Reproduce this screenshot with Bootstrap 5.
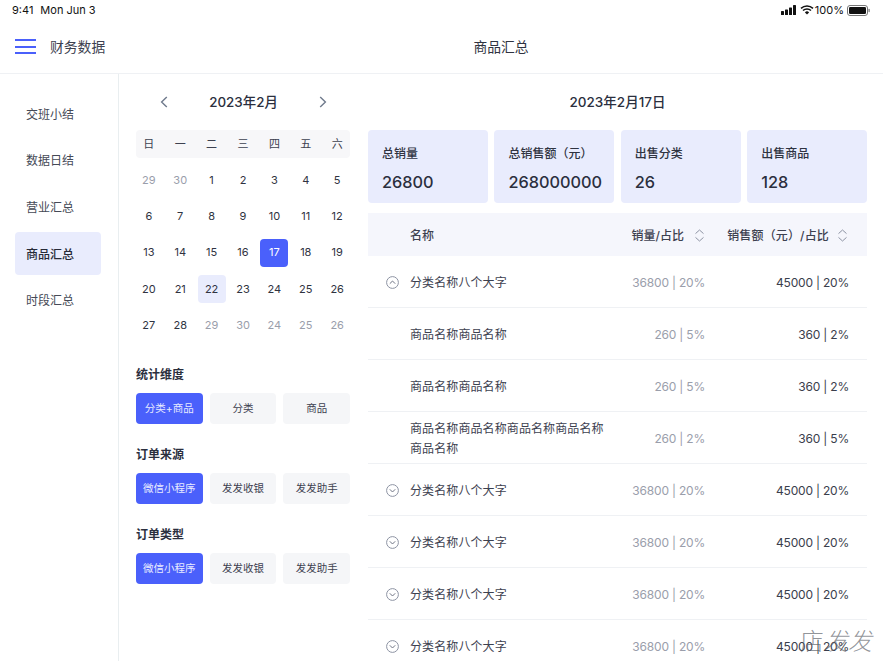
<!DOCTYPE html>
<html lang="zh">
<head>
<meta charset="utf-8">
<title>商品汇总</title>
<link href="https://cdn.jsdelivr.net/npm/bootstrap@5.3.0/dist/css/bootstrap.min.css" rel="stylesheet">
<style>
html,body{height:661px;overflow:hidden;background:#fff}
body{font-family:Inter,"Noto Sans CJK SC",sans-serif;color:#2f3341;font-size:12px;position:relative}
.sbar{height:20px;padding:0 13px 0 12px;font-size:11px;color:#111}
.sbar span.tm{margin-right:7px}
.sig{margin-right:4px}
.wifi{margin-right:1px}
.pct{margin-right:3px}
.topbar{height:54px;border-bottom:1px solid #eff1f4}
.topleft{width:119px;padding-left:15px;gap:14px;font-size:13.8px;color:#3d4150;flex:none}
.topleft span,.toptitle{padding-top:2px}
.burger{width:21px;height:15px;display:flex;flex-direction:column;justify-content:space-between}
.burger i{display:block;height:2px;background:#4a60fb}
.toptitle{font-size:13.8px;color:#2f3341}
.shell{height:587px}
.side{width:119px;border-right:1px solid #e9eef0;padding:18px 17px 0 15px;flex:none}
.sideitem{height:43px;margin-bottom:3.7px;padding:2px 0 0 11px;border-radius:4px;color:#454956}
.sideitem.on{background:#e9ecfd;color:#262a38;font-weight:500}
.calcol{width:249px;flex:none;padding:0 18px 0 17px}
.monthhd{height:56px;padding:0 23px 0 24px;font-size:13.4px;font-weight:500;color:#2b2f3e}
.wk,.dayrow{display:grid;grid-template-columns:repeat(7,31.4px);justify-content:center}
.wk{background:#f7f7f9;border-radius:4px;height:27.5px;align-items:center;text-align:center;font-size:11px;color:#3d4150;margin-bottom:4.5px}
.dayrow{height:36.3px;align-items:center;text-align:center;font-size:11px;color:#2f3341}
.dayrow .dim{color:#9a9eab}
.dayrow span{display:flex;align-items:center;justify-content:center;height:28px;width:28px;margin:0 auto;border-radius:4px}
.dayrow span.sel{background:#4a60fb;color:#fff}
.dayrow span.near{background:#e9ecfd}
.sect{font-size:12px;font-weight:600;color:#2b2f3e;line-height:16px;margin-bottom:10px}
.sect.first{margin-top:24px}
.chips{gap:7px;margin-bottom:23px}
.chip{flex:1 1 0;height:31px;border-radius:4px;background:#f5f6f8;color:#3d4150;font-size:10.5px;white-space:nowrap}
.chip.on{background:#4a60fb;color:#e8ebff}
.maincol{flex:1;padding-right:16px;min-width:0}
.daytitle{height:56px;font-size:13.5px;font-weight:500;color:#2b2f3e}
.stats{display:grid;grid-template-columns:repeat(4,minmax(0,1fr));gap:6.5px;margin-bottom:10px}
.stat{background:#e9ecfd;border-radius:4px;height:73px;padding:15px 14px 0}
.stat .lbl{font-size:12px;font-weight:500;line-height:18px;color:#2f3341}
.stat .val{font-size:16.3px;font-weight:500;line-height:22px;margin-top:8px;color:#2b2f3e}
.trow{display:flex;align-items:center;height:52px;padding-top:2px;border-bottom:1px solid #eff1f4;font-size:12px}
.trow.hd{height:43px;background:#f5f6fc;border-bottom:0;font-weight:500;color:#3d4150}
.c0{width:42px;flex:none;padding-left:18px;display:flex}
.c1{width:203px;flex:none;line-height:20px;color:#3d4150;letter-spacing:.1px}
.c2{width:92px;flex:none;text-align:right;color:#9a9eab;letter-spacing:-.2px}
.c3{flex:1;text-align:right;padding-right:18px;color:#3a3e4c;letter-spacing:-.2px}
.hd .c2,.hd .c3{color:#3d4150;display:flex;justify-content:flex-end;align-items:center;gap:10px;letter-spacing:0}
.hd .c3{gap:8px;padding-right:19px;letter-spacing:.15px}
.wmark{position:absolute;right:11px;bottom:6px;font-size:24px;font-weight:300;color:rgba(90,94,102,.66);line-height:26px}
.wmark em{font-style:italic}
</style>
</head>
<body>
<div class="sbar d-flex align-items-center justify-content-between">
  <div><span class="tm">9:41</span><span>Mon Jun 3</span></div>
  <div class="d-flex align-items-center">
    <svg class="sig" width="15" height="10" viewBox="0 0 15 10"><rect x="0" y="6" width="3" height="4" rx=".6" fill="#111"/><rect x="4" y="4.5" width="3" height="5.5" rx=".6" fill="#111"/><rect x="8" y="2.5" width="3" height="7.5" rx=".6" fill="#111"/><rect x="12" y="0" width="3" height="10" rx=".6" fill="#111"/></svg>
    <svg class="wifi" width="14" height="10" viewBox="0 0 14 10"><path d="M1 3.4a8.6 8.6 0 0 1 12 0M3 5.5a5.8 5.8 0 0 1 8 0" fill="none" stroke="#111" stroke-width="1.5"/><path d="M7 9.6 4.9 7.4a3 3 0 0 1 4.2 0z" fill="#111"/></svg>
    <span class="pct">100%</span>
    <svg width="23" height="11" viewBox="0 0 23 11"><rect x=".5" y=".5" width="20" height="10" rx="2.5" fill="none" stroke="#777"/><rect x="2" y="2" width="17" height="7" rx="1.3" fill="#111"/><rect x="21.5" y="3.8" width="1.2" height="3.4" rx=".6" fill="#777"/></svg>
  </div>
</div>
<div class="topbar d-flex align-items-center">
  <div class="topleft d-flex align-items-center"><div class="burger"><i></i><i></i><i></i></div><span>财务数据</span></div>
  <div class="toptitle flex-grow-1 text-center">商品汇总</div>
</div>
<div class="shell d-flex">
  <div class="side">
    <div class="sideitem d-flex align-items-center">交班小结</div>
    <div class="sideitem d-flex align-items-center">数据日结</div>
    <div class="sideitem d-flex align-items-center">营业汇总</div>
    <div class="sideitem on d-flex align-items-center">商品汇总</div>
    <div class="sideitem d-flex align-items-center">时段汇总</div>
  </div>
  <div class="calcol">
    <div class="monthhd d-flex align-items-center justify-content-between">
      <svg width="8" height="12" viewBox="0 0 8 12"><path d="M6.8 1 1.6 6l5.2 5" fill="none" stroke="#6f7a8c" stroke-width="1.4"/></svg>
      <span>2023年2月</span>
      <svg width="8" height="12" viewBox="0 0 8 12"><path d="M1.2 1 6.4 6l-5.2 5" fill="none" stroke="#6f7a8c" stroke-width="1.4"/></svg>
    </div>
    <div class="wk"><span>日</span><span>一</span><span>二</span><span>三</span><span>四</span><span>五</span><span>六</span></div>
    <div class="dayrow"><span class="dim">29</span><span class="dim">30</span><span>1</span><span>2</span><span>3</span><span>4</span><span>5</span></div>
    <div class="dayrow"><span>6</span><span>7</span><span>8</span><span>9</span><span>10</span><span>11</span><span>12</span></div>
    <div class="dayrow"><span>13</span><span>14</span><span>15</span><span>16</span><span class="sel">17</span><span>18</span><span>19</span></div>
    <div class="dayrow"><span>20</span><span>21</span><span class="near">22</span><span>23</span><span>24</span><span>25</span><span>26</span></div>
    <div class="dayrow"><span>27</span><span>28</span><span class="dim">29</span><span class="dim">30</span><span class="dim">24</span><span class="dim">25</span><span class="dim">26</span></div>
    <div class="sect first">统计维度</div>
    <div class="chips d-flex"><div class="chip on d-flex align-items-center justify-content-center">分类+商品</div><div class="chip d-flex align-items-center justify-content-center">分类</div><div class="chip d-flex align-items-center justify-content-center">商品</div></div>
    <div class="sect">订单来源</div>
    <div class="chips d-flex"><div class="chip on d-flex align-items-center justify-content-center">微信小程序</div><div class="chip d-flex align-items-center justify-content-center">发发收银</div><div class="chip d-flex align-items-center justify-content-center">发发助手</div></div>
    <div class="sect">订单类型</div>
    <div class="chips d-flex"><div class="chip on d-flex align-items-center justify-content-center">微信小程序</div><div class="chip d-flex align-items-center justify-content-center">发发收银</div><div class="chip d-flex align-items-center justify-content-center">发发助手</div></div>
  </div>
  <div class="maincol">
    <div class="daytitle d-flex align-items-center justify-content-center">2023年2月17日</div>
    <div class="stats">
      <div class="stat"><div class="lbl">总销量</div><div class="val">26800</div></div>
      <div class="stat"><div class="lbl">总销售额（元）</div><div class="val">268000000</div></div>
      <div class="stat"><div class="lbl">出售分类</div><div class="val">26</div></div>
      <div class="stat"><div class="lbl">出售商品</div><div class="val">128</div></div>
    </div>
    <div class="trow hd">
      <div class="c0"></div><div class="c1">名称</div>
      <div class="c2"><span>销量/占比</span><svg width="11" height="13" viewBox="0 0 11 13"><path d="M1.5 4.6 5.5 1l4 3.6M1.5 8.4l4 3.6 4-3.6" fill="none" stroke="#8d93a3" stroke-width="1"/></svg></div>
      <div class="c3"><span>销售额（元）/占比</span><svg width="11" height="13" viewBox="0 0 11 13"><path d="M1.5 4.6 5.5 1l4 3.6M1.5 8.4l4 3.6 4-3.6" fill="none" stroke="#8d93a3" stroke-width="1"/></svg></div>
    </div>
    <div class="trow"><div class="c0"><svg width="13" height="13" viewBox="0 0 13 13"><circle cx="6.5" cy="6.5" r="5.9" fill="none" stroke="#8d93a3"/><path d="M3.8 7.7 6.5 5l2.7 2.7" fill="none" stroke="#6f7484"/></svg></div><div class="c1">分类名称八个大字</div><div class="c2">36800 | 20%</div><div class="c3">45000 | 20%</div></div>
    <div class="trow"><div class="c0"></div><div class="c1">商品名称商品名称</div><div class="c2">260 | 5%</div><div class="c3">360 | 2%</div></div>
    <div class="trow"><div class="c0"></div><div class="c1">商品名称商品名称</div><div class="c2">260 | 5%</div><div class="c3">360 | 2%</div></div>
    <div class="trow"><div class="c0"></div><div class="c1">商品名称商品名称商品名称商品名称商品名称</div><div class="c2">260 | 2%</div><div class="c3">360 | 5%</div></div>
    <div class="trow"><div class="c0"><svg width="13" height="13" viewBox="0 0 13 13"><circle cx="6.5" cy="6.5" r="5.9" fill="none" stroke="#8d93a3"/><path d="M3.8 5.3 6.5 8l2.7-2.7" fill="none" stroke="#6f7484"/></svg></div><div class="c1">分类名称八个大字</div><div class="c2">36800 | 20%</div><div class="c3">45000 | 20%</div></div>
    <div class="trow"><div class="c0"><svg width="13" height="13" viewBox="0 0 13 13"><circle cx="6.5" cy="6.5" r="5.9" fill="none" stroke="#8d93a3"/><path d="M3.8 5.3 6.5 8l2.7-2.7" fill="none" stroke="#6f7484"/></svg></div><div class="c1">分类名称八个大字</div><div class="c2">36800 | 20%</div><div class="c3">45000 | 20%</div></div>
    <div class="trow"><div class="c0"><svg width="13" height="13" viewBox="0 0 13 13"><circle cx="6.5" cy="6.5" r="5.9" fill="none" stroke="#8d93a3"/><path d="M3.8 5.3 6.5 8l2.7-2.7" fill="none" stroke="#6f7484"/></svg></div><div class="c1">分类名称八个大字</div><div class="c2">36800 | 20%</div><div class="c3">45000 | 20%</div></div>
    <div class="trow"><div class="c0"><svg width="13" height="13" viewBox="0 0 13 13"><circle cx="6.5" cy="6.5" r="5.9" fill="none" stroke="#8d93a3"/><path d="M3.8 5.3 6.5 8l2.7-2.7" fill="none" stroke="#6f7484"/></svg></div><div class="c1">分类名称八个大字</div><div class="c2">36800 | 20%</div><div class="c3">45000 | 20%</div></div>
  </div>
</div>
<div class="wmark">店<em>发发</em></div>
<script src="https://cdn.jsdelivr.net/npm/bootstrap@5.3.0/dist/js/bootstrap.bundle.min.js"></script>
</body>
</html>
